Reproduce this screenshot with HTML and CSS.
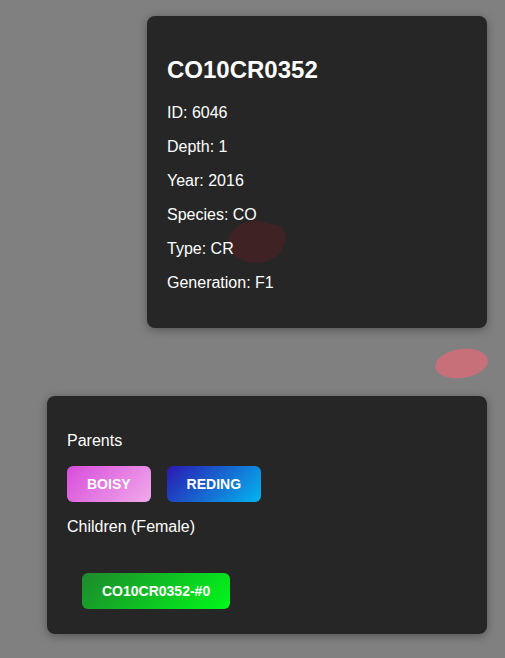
FILE: index.html
```html
<!DOCTYPE html>
<html lang="en">
<head>
<meta charset="utf-8">
<title>CO10CR0352</title>
<link rel="stylesheet" href="styles.css">
</head>
<body>
<div class="page">
  <div class="card card-info">
    <h2 class="title">CO10CR0352</h2>
    <p class="line">ID: 6046</p>
    <p class="line">Depth: 1</p>
    <p class="line">Year: 2016</p>
    <p class="line">Species: CO</p>
    <p class="line">Type: CR</p>
    <p class="line">Generation: F1</p>
    <span class="blob-dark"></span>
    <span class="blob-dark blob-dark-bump"></span>
  </div>
  <span class="blob-pink"></span>
  <div class="card card-family">
    <p class="line">Parents</p>
    <div class="chips">
      <span class="chip chip-boisy">BOISY</span>
      <span class="chip chip-reding">REDING</span>
    </div>
    <p class="line">Children (Female)</p>
    <div class="children">
      <span class="chip chip-child">CO10CR0352-#0</span>
    </div>
  </div>
</div>
</body>
</html>
```

FILE: styles.css
```css
html, body {
  margin: 0;
  padding: 0;
  background: #808080;
  font-family: "Liberation Sans", Arial, sans-serif;
  color: #ffffff;
}

.page {
  position: relative;
  display: flex;
  flex-direction: column;
  align-items: flex-end;
  padding: 16px 18px 24px 18px;
}

.card {
  position: relative;
  background: #262626;
  border-radius: 8px;
  padding: 20px;
  box-sizing: border-box;
  box-shadow: 0 2px 10px rgba(0, 0, 0, 0.35);
}

.card-info {
  width: 340px;
  margin-bottom: 68px;
}

.card-family {
  width: 440px;
}

.title {
  position: relative;
  z-index: 1;
  margin: 20px 0;
  font-size: 24px;
  font-weight: bold;
  line-height: 27.6px;
}

.line {
  position: relative;
  z-index: 1;
  margin: 16px 0;
  font-size: 16px;
  line-height: 18px;
}

.chips {
  display: flex;
  gap: 16px;
}

.chip {
  display: inline-block;
  padding: 10px 20px;
  border-radius: 6px;
  font-size: 14px;
  line-height: 16px;
  font-weight: bold;
  color: #ffffff;
}

.chip-boisy {
  background: linear-gradient(135deg, #d84cdb 0%, #f0aaea 100%);
}

.chip-reding {
  background: linear-gradient(135deg, #2a18b2 0%, #03b6ef 100%);
}

.chip-child {
  background: linear-gradient(135deg, #1e882c 0%, #00f91a 100%);
}

.children {
  display: flex;
  padding: 21px 15px 5px 15px;
}

.blob-dark {
  position: absolute;
  left: 81px;
  top: 205px;
  width: 56px;
  height: 42px;
  border-radius: 50%;
  background: #3f2224;
  z-index: 0;
}

.blob-dark-bump {
  left: 110px;
  top: 208px;
  width: 29px;
  height: 28px;
}

.blob-pink {
  position: absolute;
  left: 435px;
  top: 349px;
  width: 53px;
  height: 29px;
  border-radius: 50%;
  background: #c8707a;
  transform: rotate(-8deg);
}
```
